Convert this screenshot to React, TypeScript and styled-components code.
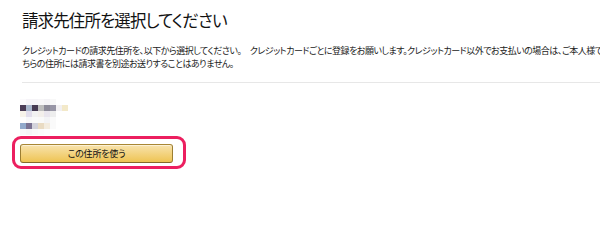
import styled, { createGlobalStyle } from "styled-components";

const GlobalStyle = createGlobalStyle`
    html, body {
        margin: 0;
        padding: 0;
        background: #fff;
        overflow: hidden;
    }
`;

const Page = styled.div`
    padding: 9px 0 0 22px;
    font-family: "Noto Sans CJK JP", "Noto Sans", sans-serif;
    font-feature-settings: "palt";
    color: #111;
    overflow: hidden;
`;

const Title = styled.h1`
    margin: 0;
    font-size: 16.5px;
    line-height: 23px;
    letter-spacing: -0.9px;
    font-weight: 400;
    color: #111;
`;

const Description = styled.div`
    margin-top: 12px;
    font-size: 9px;
    line-height: 13px;
    letter-spacing: -0.5px;
    color: #222;
    overflow: hidden;
`;

const Line = styled.p`
    margin: 0;
    white-space: nowrap;
`;

const Divider = styled.hr`
    margin: 12px 0 0;
    border: 0;
    height: 1px;
    background: #e7e7e7;
`;

const Mosaic = styled.svg`
    display: block;
    margin: 16px 0 0 -2px;
`;

const Highlight = styled.div`
    display: inline-flex;
    margin: 1px 0 0 -10px;
    padding: 5px 10px 3px 5px;
    border: 3px solid #ec1f5f;
    border-radius: 9px;
`;

const UseButton = styled.button`
    width: 153px;
    height: 19px;
    padding: 0;
    border: 1px solid;
    border-color: #a88734 #9c7e31 #846a29;
    border-radius: 3px;
    background: linear-gradient(to bottom, #f8e3ad, #eec453);
    box-shadow: inset 0 1px 0 rgba(255, 255, 255, 0.5);
    font-family: inherit;
    font-feature-settings: "palt";
    font-size: 9px;
    letter-spacing: -0.2px;
    line-height: 17px;
    color: #111;
    cursor: pointer;
`;

// blurred address block, drawn as coarse pixels
const mosaicRows: string[][] = [
    ["#fbfafc", "#f6f4f8", "#f5f4f7", "#f7f6f8", "#f4f3f6", "#f8f8f8", "#fff", "#fff"],
    ["#4b3c56", "#a9b7cc", "#463a52", "#bdbdbd", "#8c8a98", "#9896a6", "#f2f0f2", "#f3e9c9"],
    ["#f7f3ea", "#e2deec", "#f2f2f2", "#f3efeb", "#e9e5ed", "#eeeeee", "#fff", "#fff"],
    ["#fdfdfd", "#f7f7f9", "#fafafa", "#f9f9f9", "#f3f3f5", "#fafafa", "#fff", "#fff"],
    ["#91a9cb", "#7a7292", "#d3d3dc", "#e9dbc3", "#f3ecdf", "#fafafa", "#fff", "#fff"],
    ["#f8f8fa", "#f5f5f7", "#f9f9f9", "#fbfbfb", "#fdfdfd", "#fff", "#fff", "#fff"],
];

function AddressMosaic() {
    return (
        <Mosaic width={48} height={36} viewBox="0 0 48 36">
            {mosaicRows.map((row, r) =>
                row.map((c, i) => (
                    <rect key={`${r}-${i}`} x={i * 6} y={r * 6} width={6} height={6} fill={c} />
                ))
            )}
        </Mosaic>
    );
}

function App() {
    return (
        <>
            <GlobalStyle />
            <Page>
                <Title>請求先住所を選択してください</Title>
                <Description>
                    <Line>
                        クレジットカードの請求先住所を、以下から選択してください。　クレジットカードごとに登録をお願いします。クレジットカード以外でお支払いの場合は、ご本人様であることを確認させていただく場合がございます。こ
                    </Line>
                    <Line>ちらの住所には請求書を別途お送りすることはありません。</Line>
                </Description>
                <Divider />
                <AddressMosaic />
                <Highlight>
                    <UseButton>この住所を使う</UseButton>
                </Highlight>
            </Page>
        </>
    );
}

export default App;
